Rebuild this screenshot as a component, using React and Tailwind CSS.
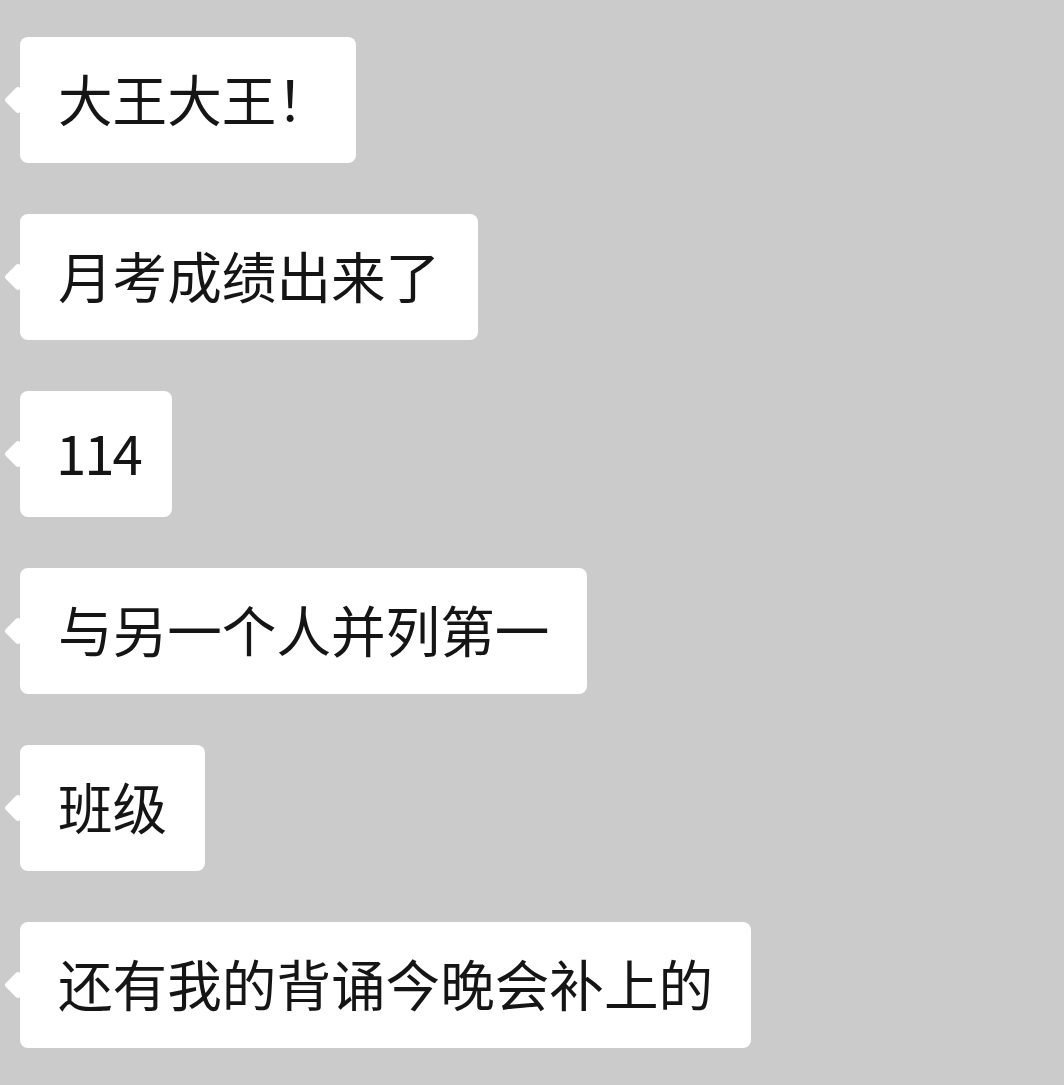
export default function App() {
  const msgs = [
    { t: <>大王大王<span className="mr-[-13px]">！</span></>, p: "px-[38px]" },
    { t: "月考成绩出来了", p: "px-[38px]" },
    { t: <span className="tracking-[-2px]">114</span>, p: "pl-[36px] pr-[31px]" },
    { t: "与另一个人并列第一", p: "px-[38px]" },
    { t: "班级", p: "px-[38px]" },
    { t: "还有我的背诵今晚会补上的", p: "px-[38px]" },
  ];
  return (
    <div className="w-[1064px] h-[1085px] bg-[#cbcbcb] overflow-hidden flex flex-col items-start gap-[51px] pt-[37px] pl-[20px]" style={{ fontFamily: '"Noto Sans CJK SC", "Noto Sans", sans-serif' }}>
      {msgs.map((m, i) => (
        <div key={i} className={`relative h-[126px] bg-white rounded-[8px] pb-[4px] flex items-center text-[54.6px] leading-none text-[#151515] ${m.p}`}>
          <div className="absolute left-[-12px] top-1/2 -translate-y-1/2 w-[20px] h-[20px] rotate-45 rounded-[3px] bg-white" />
          <span className="relative whitespace-nowrap">{m.t}</span>
        </div>
      ))}
    </div>
  );
}
